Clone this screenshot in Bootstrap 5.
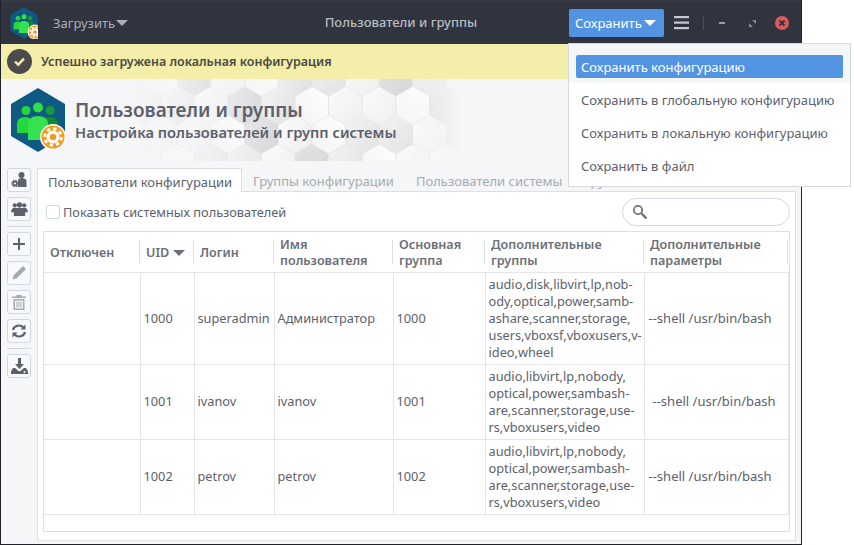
<!DOCTYPE html>
<html lang="ru"><head><meta charset="utf-8"><title>Пользователи и группы</title>
<link href="https://cdn.jsdelivr.net/npm/bootstrap@5.3.0/dist/css/bootstrap.min.css" rel="stylesheet">
<style>
html,body{margin:0;height:545px;overflow:hidden;background:#fff;font-family:"Noto Sans",sans-serif;font-size:13px;color:#5c616c}
.win{width:802px;height:545px;border:1px solid #1f222a;border-top:0;background:#f5f6f7;position:relative}
.hbar{height:44px;background:#2f343f;padding:0 9px;border-top:2px solid #353a46}
.load{color:#a9adb5;font-size:13px;margin-left:15px;padding-top:1px}
.caret-d{width:0;height:0;border-left:6px solid transparent;border-right:6px solid transparent;border-top:6px solid currentColor;display:inline-block;margin-left:1px;vertical-align:2px}
.htitle{color:#b9bcc3;font-weight:500;font-size:13px;position:absolute;left:0;right:0;top:11px;text-align:center;pointer-events:none}
.savebtn{background:#5294e2;color:#fff;width:95px;height:28px;border-radius:2px;font-size:13px;line-height:29px;padding-left:6px;white-space:nowrap}
.hctl{margin-right:3px}
.msgbar{height:35px;background:#f3eea9;padding:2px 0 0 6px;color:#4a4a42;font-weight:600;font-size:12.5px;gap:9px}
.msgico{width:25px;height:25px;display:block;margin-top:-2px}
.bann{height:82px;position:relative;overflow:hidden;padding-left:9px;gap:9px}
.bann-bg{position:absolute;left:120px;top:0;width:340px;height:82px}
.bann-txt{position:relative;color:#5c616c;font-weight:600;line-height:1;white-space:nowrap;padding-top:1px}
.bann-t1{font-size:19px;margin-bottom:5px}
.bann-t2{font-size:14.7px}
.main{padding:7px 5px 0 6px;gap:6px;height:384px}
.side{width:24px;gap:5px}
.tbtn{width:24px;height:24px;background:#f8f9fa;border:1px solid #cfd6e6;border-radius:3px;padding:0;display:flex;align-items:center;justify-content:center;color:#5c616c}
.tbtn.off{color:#a6a9ae}
.tsep{height:1px;background:#d5d8dc}
.tabsw{flex:1;min-width:0}
.tabrow{height:24px;white-space:nowrap;overflow:hidden}
.tabi{padding:0 11px;line-height:26px;color:#a7abb1;height:24px;border-bottom:1px solid #dcdfe3}
.tabi.act{background:#fff;color:#5c616c;border:1px solid #dcdfe3;border-bottom:0;width:205px;padding-left:10px}
.tabfill{flex:1;border-bottom:1px solid #dcdfe3}
.pane{height:349px;background:#fff;border:1px solid #dcdfe3;border-top:0;padding:6px 5px 7px 5px}
.tools{height:28px;padding-left:3px;margin-bottom:5px;font-size:12.75px}
.cbx{width:14px;height:14px;border:1px solid #cfd6e6;border-radius:2px;background:#fff;margin-right:3px;display:inline-block}
.cblbl{padding-top:1px}
.srch{width:168px;height:28px;border:1px solid #cfd6e6;border-radius:14px;background:#fff;padding-left:9px}
.tblbox{height:301px;border:1px solid #dcdfe3;overflow:hidden}
.utbl{table-layout:fixed;width:744px;margin:0;border-collapse:collapse;font-size:12.75px;color:#5c616c;--bs-table-bg:transparent;--bs-table-color:#5c616c}
.utbl th{height:40px;font-size:12.6px;font-weight:600;line-height:16px;padding:2px 6px 0;color:#6b7079;vertical-align:middle;border:0;border-bottom:1px solid #e3e5e8;background:linear-gradient(#dcdfe3,#dcdfe3) right center/1px 24px no-repeat}
.utbl td{padding:0 0 0 3px;vertical-align:middle;line-height:17px;border:0;border-right:1px solid #e3e5e8;border-bottom:1px solid #e3e5e8;white-space:nowrap}
.utbl td.sh{padding-left:4px;font-size:13px}
.utbl td.sh2{padding-left:8px;font-size:13px}
.sarrow{width:0;height:0;border-left:6px solid transparent;border-right:6px solid transparent;border-top:6px solid #6b7079;display:inline-block;margin-left:4px;vertical-align:1px}
.savemenu{position:absolute;left:568px;top:43px;width:283px;height:144px;background:#fff;border:1px solid #d6d9dd;border-radius:0;padding:0;margin:0;display:block;font-size:13px}
.savemenu .dropdown-item{color:#5c616c;padding:0 0 0 12px;height:33px;line-height:35px}
.savemenu .firstwrap{background:#f5f6f7;height:39px;padding:11px 7px 5px 7px}
.savemenu .firstwrap .dropdown-item{background:#5294e2;color:#fff;height:23px;line-height:25px;padding-left:5px;border-radius:2px}
.ptr{position:absolute;left:799px;top:65px;width:24px;height:28px}
</style></head><body>
<div class="win">
 <div class="hbar d-flex align-items-center position-relative">
  <svg width="28" height="32" viewBox="0 0 56 64" style="flex:none"><use href="#figs"/><use href="#gear" transform="translate(50 50) scale(1.150)"/></svg>
  <span class="load">Загрузить<span class="caret-d"></span></span>
  <div class="htitle">Пользователи и группы</div>
  <div class="hctl ms-auto d-flex align-items-center">
   <div class="savebtn">Сохранить<span class="caret-d" style="margin-left:2px"></span></div>
   <svg style="margin-left:10px" width="15" height="14" viewBox="0 0 15 14" fill="#c5c8ce"><rect y="0" width="15" height="2.200"/><rect y="5.500" width="15" height="2.200"/><rect y="11" width="15" height="2.200"/></svg>
   <svg style="margin-left:14px" width="1" height="14"><rect width="1" height="14" fill="#4a4f5c"/></svg>
   <svg style="margin-left:15px" width="6" height="3"><rect width="6" height="2" fill="#9b9ea6"/></svg>
   <svg style="margin-left:24px" width="7" height="7" viewBox="0 0 8 8" fill="#8a8e97"><path d="M3.500 0H8v4.500zM0 3.500L4.500 8H0z"/></svg>
   <svg style="margin-left:19px" width="14" height="14" viewBox="0 0 14 14"><circle cx="7" cy="7" r="7" fill="#dd5a5c"/><path d="M4.500 4.500l5 5M9.500 4.500l-5 5" stroke="#2f343f" stroke-width="1.800"/></svg>
  </div>
 </div>
 <div class="msgbar d-flex align-items-center">
  <svg class="msgico" viewBox="0 0 25 25"><circle cx="12.500" cy="12.500" r="12.500" fill="#4b4b4b"/><path d="M8 12.500l3.200 3.200 5.800-6" stroke="#f3eea9" stroke-width="2.400" fill="none"/></svg>
  <span>Успешно загружена локальная конфигурация</span>
 </div>
 <div class="bann d-flex align-items-center">
  <svg class="bann-bg" viewBox="0 0 340 82">
   <defs>
    <linearGradient id="fadeg"><stop offset="0" stop-color="#000"/><stop offset=".25" stop-color="#999"/><stop offset=".5" stop-color="#fff"/><stop offset=".85" stop-color="#eee"/><stop offset="1" stop-color="#000"/></linearGradient>
    <mask id="fadem"><rect width="340" height="82" fill="url(#fadeg)"/></mask>
    <linearGradient id="ha" x1="0" y1="0" x2="1" y2="1"><stop offset="0" stop-color="#fbfbfb"/><stop offset="1" stop-color="#eeeeef"/></linearGradient>
    <linearGradient id="hb" x1="0" y1="0" x2="1" y2="1"><stop offset="0" stop-color="#f3f3f4"/><stop offset="1" stop-color="#dfe0e1"/></linearGradient>
    <linearGradient id="hc" x1="1" y1="0" x2="0" y2="1"><stop offset="0" stop-color="#fefefe"/><stop offset="1" stop-color="#f3f3f4"/></linearGradient>
    <linearGradient id="hd" x1="0" y1="0" x2="1" y2="1"><stop offset="0" stop-color="#e4e4e5"/><stop offset="1" stop-color="#d3d4d6"/></linearGradient>
    <path id="hx" d="M0-19L16.300-9.500V9.500L0 19-16.300 9.500V-9.500z"/>
   </defs>
   <g id="hexes" mask="url(#fadem)"><rect width="340" height="82" fill="#e3e3e5"/></g>
  </svg>
  <svg class="position-relative" width="56" height="64" viewBox="0 0 56 64" style="flex:none"><use href="#figs"/><use href="#gear" transform="translate(43 49)"/></svg>
  <div class="bann-txt"><div class="bann-t1">Пользователи и группы</div><div class="bann-t2">Настройка пользователей и групп системы</div></div>
 </div>
 <div class="main d-flex">
  <div class="side d-flex flex-column">
   <div class="tbtn"><svg width="17" height="16" viewBox="0 0 17 16" fill="currentColor"><circle cx="10.500" cy="3" r="3"/><path d="M7 15V9c0-1.800 1.500-3 3.500-3S15.500 7.200 15.500 9v6z"/><circle cx="4" cy="11.500" r="2" fill="none" stroke="currentColor" stroke-width="1.800"/><circle cx="4" cy="11.500" r="3.300" fill="none" stroke="currentColor" stroke-width="1.100" stroke-dasharray="1.300 1.300"/></svg></div>
   <div class="tbtn"><svg width="17" height="15" viewBox="0 0 18 16" fill="currentColor"><circle cx="4" cy="3.500" r="2.300"/><circle cx="14" cy="3.500" r="2.300"/><circle cx="9" cy="3" r="2.800"/><path d="M0 11c0-3 1.500-5 4-5 1 0 2 .3 2.500 1L4 11zM18 11c0-3-1.500-5-4-5-1 0-2 .3-2.500 1l2.500 4z"/><path d="M3 15V11c0-3 2.500-4.800 6-4.800s6 1.800 6 4.800v4z"/></svg></div>
   <div class="tsep"></div>
   <div class="tbtn"><svg width="12" height="12" viewBox="0 0 12 12" fill="currentColor"><path d="M5 0h2v5h5v2H7v5H5V7H0V5h5z"/></svg></div>
   <div class="tbtn off"><svg width="16" height="16" viewBox="0 0 16 16" fill="currentColor"><path d="M12 1l3 3-9.500 9.500-4 1 1-4z"/></svg></div>
   <div class="tbtn off"><svg width="14" height="16" viewBox="0 0 14 16" fill="currentColor"><path d="M0 2.500h4.500V1h5v1.500H14V4H0zM1.500 5h11v11h-11zM3 6.500V14.500h8V6.500z"/><path d="M4.500 7.500h1v6h-1zM6.500 7.500h1v6h-1zM8.500 7.500h1v6h-1z"/></svg></div>
   <div class="tbtn"><svg width="16" height="16" viewBox="0 0 16 16" fill="none" stroke="currentColor" stroke-width="2.200"><path d="M2 7a6 5.500 0 0 1 10.500-2.500M14 9a6 5.500 0 0 1-10.500 2.500"/><path d="M14.500 1.500v5h-5zM1.500 14.500v-5h5z" fill="currentColor" stroke="none"/></svg></div>
   <div class="tsep"></div>
   <div class="tbtn"><svg width="17" height="16" viewBox="0 0 17 16" fill="currentColor"><path d="M7 0h3v6h3l-4.500 5L4 6h3z"/><path d="M2 10h2l3.500 3H9.500L13 10h2l2 3.500V16H0v-2.500z"/><circle cx="13.500" cy="14" r="1" fill="#f8f9fa"/></svg></div>
  </div>
  <div class="tabsw d-flex flex-column">
   <div class="tabrow d-flex">
    <div class="tabi act">Пользователи конфигурации</div>
    <div class="tabi">Группы конфигурации</div>
    <div class="tabi">Пользователи системы</div>
    <div class="tabi">Группы системы</div>
    <div class="tabfill"></div>
   </div>
   <div class="pane">
    <div class="tools d-flex align-items-center">
     <span class="cbx"></span><span class="cblbl">Показать системных пользователей</span>
     <div class="srch ms-auto d-flex align-items-center"><svg width="16" height="16" viewBox="0 0 16 16" fill="none" stroke="#6d7178"><circle cx="6" cy="6" r="4.200" stroke-width="1.800"/><path d="M9.500 9.500l5 5" stroke-width="2.400"/></svg></div>
    </div>
    <div class="tblbox">
     <table class="table utbl">
      <colgroup><col style="width:96px"><col style="width:54px"><col style="width:80px"><col style="width:119px"><col style="width:92px"><col style="width:159px"><col style="width:144px"></colgroup>
      <thead><tr><th>Отключен</th><th>UID<span class="sarrow"></span></th><th>Логин</th><th>Имя<br>пользователя</th><th>Основная<br>группа</th><th>Дополнительные<br>группы</th><th>Дополнительные<br>параметры</th></tr></thead>
      <tbody>
       <tr style="height:92px"><td></td><td>1000</td><td>superadmin</td><td>Администратор</td><td>1000</td><td>audio,disk,libvirt,lp,nob-<br>ody,optical,power,samb-<br>ashare,scanner,storage,<br>users,vboxsf,vboxusers,v-<br>ideo,wheel</td><td class="sh">--shell /usr/bin/bash</td></tr>
       <tr style="height:75px"><td></td><td>1001</td><td>ivanov</td><td>ivanov</td><td>1001</td><td>audio,libvirt,lp,nobody,<br>optical,power,sambash-<br>are,scanner,storage,use-<br>rs,vboxusers,video</td><td class="sh2">--shell /usr/bin/bash</td></tr>
       <tr style="height:75px"><td></td><td>1002</td><td>petrov</td><td>petrov</td><td>1002</td><td>audio,libvirt,lp,nobody,<br>optical,power,sambash-<br>are,scanner,storage,use-<br>rs,vboxusers,video</td><td class="sh">--shell /usr/bin/bash</td></tr>
      </tbody>
     </table>
    </div>
   </div>
  </div>
 </div>
</div>
<ul class="dropdown-menu savemenu">
 <li class="firstwrap"><a class="dropdown-item" href="#">Сохранить конфигурацию</a></li>
 <li><a class="dropdown-item" href="#">Сохранить в глобальную конфигурацию</a></li>
 <li><a class="dropdown-item" href="#">Сохранить в локальную конфигурацию</a></li>
 <li><a class="dropdown-item" href="#">Сохранить в файл</a></li>
</ul>
<svg class="ptr" viewBox="0 0 24 28"><path d="M3 2l17 13.500-7.500 2-6 7.500c-1 1-2.500 .5-2.500-1z" fill="#fff" stroke="#000" stroke-width="2.600" stroke-linejoin="round"/></svg>
<svg width="0" height="0" class="position-absolute"><defs>
 <g id="figs">
  <path d="M28 0L55 16V48L28 64 1 48V16z" fill="#0f5a82"/>
  <circle cx="40" cy="22.500" r="4.500" fill="#179a3b"/><path d="M29 50V36c0-4 4-7 10-7s9 3 9 7v14z" fill="#128a33"/>
  <circle cx="16" cy="22.500" r="4.500" fill="#25d83c"/><path d="M7 45V36c0-4 3-7 8-7s8 3 8 7v9z" fill="#25d83c"/>
  <circle cx="28" cy="19.500" r="5" fill="#2fe048"/><path d="M18 52V36c0-5 4-8 10-8s10 3 10 8v16z" fill="#33e24d"/>
 </g>
 <g id="gear">
  <circle r="13" fill="#fff"/>
  <circle r="11.500" fill="#f59a1c"/>
  <circle r="6.500" fill="#fff"/>
  <circle r="8.300" fill="none" stroke="#fff" stroke-width="3" stroke-dasharray="3.300 3.220"/>
  <circle r="3.200" fill="#f59a1c"/>
 </g>
</defs></svg>
<script>
(function(){
 var fills=["ha","hb","hc","ha","hd","hc","hb","ha","hc","hb","hd","ha"];
 var g=document.getElementById("hexes"),i=0;
 for(var r=0;r<4;r++){for(var c=0;c<12;c++){
  var u=document.createElementNS("http://www.w3.org/2000/svg","use");
  u.setAttribute("href","#hx");
  u.setAttribute("fill","url(#"+fills[(i*5+r)%12]+")");
  u.setAttribute("x",c*33.6+(r%2?16.8:0)+6);
  u.setAttribute("y",r*28.8-2);
  g.appendChild(u);i++;
 }}
})();
</script>
</body></html>
